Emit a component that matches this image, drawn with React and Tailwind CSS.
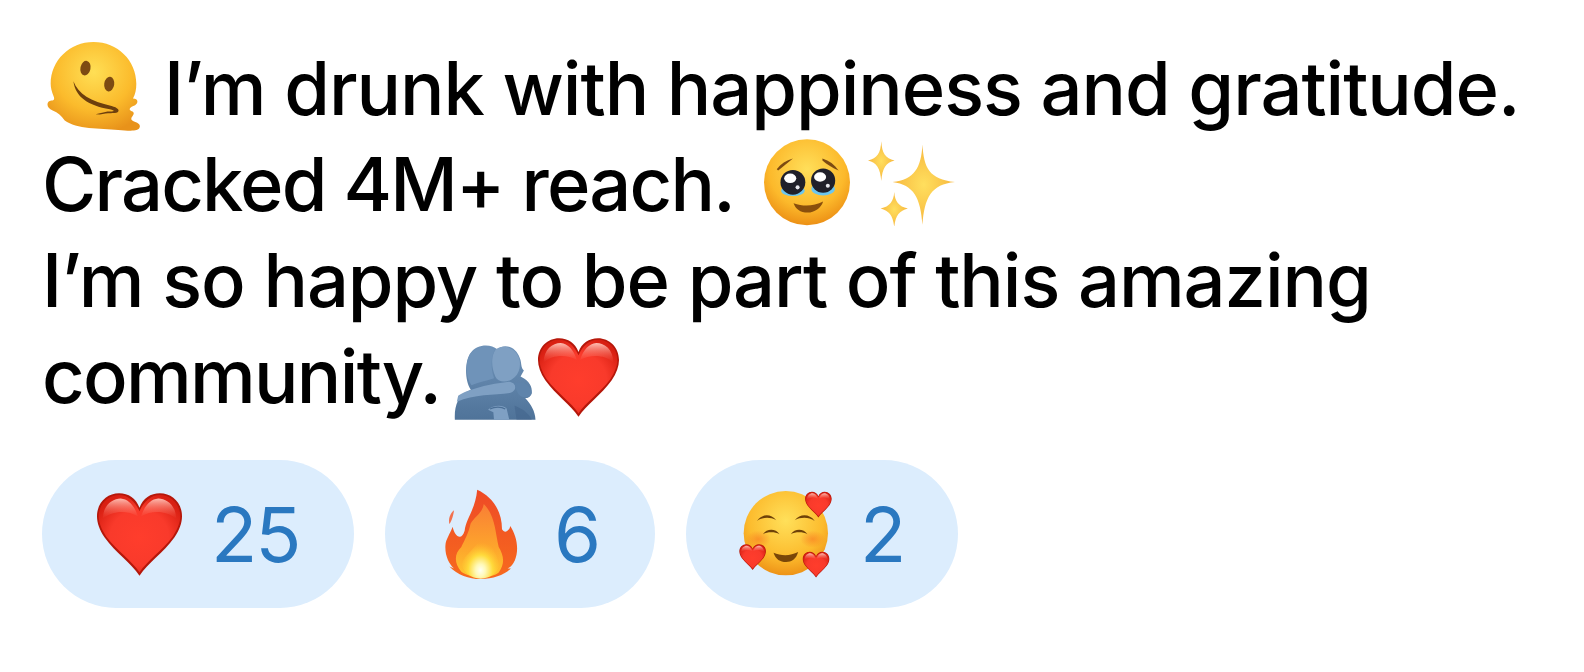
import React from 'react';

function HeartShape({ id = 'heart', transform }) {
  return (
    <g transform={transform}>
      <defs>
        <radialGradient id={`${id}-fill`} cx="0.5" cy="0.55" r="0.6">
          <stop offset="0" stopColor="#ff3d2c" />
          <stop offset="0.6" stopColor="#f93a2b" />
          <stop offset="1" stopColor="#d81f12" />
        </radialGradient>
        <linearGradient id={`${id}-shine`} x1="0" y1="0" x2="0" y2="1">
          <stop offset="0" stopColor="#ffc6bb" stopOpacity="0.95" />
          <stop offset="1" stopColor="#f9604f" stopOpacity="0" />
        </linearGradient>
      </defs>
      <path
        d="M50 97 C40 82 22 70 9 52 C3 43 0 35 0 27 C0 11 12 0 26 0 C37 0 46 6 50 17 C54 6 63 0 74 0 C88 0 100 11 100 27 C100 35 97 43 91 52 C78 70 60 82 50 97 Z"
        fill="#b5170a"
      />
      <path
        d="M50 93 C41 79 24 68 11 51 C5 42 2 34 2 27 C2 12 14 2 26 2 C37 2 45 10 50 21 C55 10 63 2 74 2 C86 2 98 12 98 27 C98 34 95 42 89 51 C76 68 59 79 50 93 Z"
        fill={`url(#${id}-fill)`}
      />
      <path
        d="M7 30 C7 14 18 6 28 6 C37 7 44 14 48 27 C36 20 18 20 7 30 Z M52 27 C56 14 63 7 72 6 C82 6 93 14 93 30 C82 20 64 20 52 27 Z"
        fill={`url(#${id}-shine)`}
      />
    </g>
  );
}

function Heart({ className, id }) {
  return (
    <svg viewBox="0 0 100 97" className={className}>
      <HeartShape id={id} />
    </svg>
  );
}

function MeltingFace({ className }) {
  return (
    <svg viewBox="45 32 285 275" className={className}>
      <defs>
        <radialGradient id="melt" cx="0.5" cy="0.34" r="0.7">
          <stop offset="0" stopColor="#ffdf55" />
          <stop offset="0.6" stopColor="#fbbb2c" />
          <stop offset="1" stopColor="#e8921a" />
        </radialGradient>
      </defs>
      <path
        d="M58 160 C58 90 115 35 186 35 C258 35 314 90 314 160 C314 178 311 192 304 204 C314 204 320 210 316 218 C310 228 296 226 294 236 C296 244 308 240 306 250 C304 258 294 262 302 270 C312 276 328 278 324 290 C320 304 290 300 260 298 C205 294 135 296 100 270 C90 255 80 246 64 240 C44 232 44 212 60 210 C68 210 70 206 67 198 C61 184 58 172 58 160 Z"
        fill="url(#melt)"
      />
      <ellipse cx="162" cy="113" rx="15" ry="22" transform="rotate(12 162 113)" fill="#7d4a12" />
      <ellipse cx="233" cy="161" rx="15" ry="22" transform="rotate(8 233 161)" fill="#7d4a12" />
      <path
        d="M126 152 C140 190 178 212 240 226 C258 231 266 238 258 245 C250 250 228 245 205 252 L192 251 L228 243 C250 243 252 240 235 236 C170 224 132 200 126 152 Z"
        fill="#6e3f0d"
      />
    </svg>
  );
}

function PleadingFace({ className }) {
  return (
    <svg viewBox="42 26 256 259" className={className}>
      <defs>
        <radialGradient id="plead" cx="0.5" cy="0.35" r="0.68">
          <stop offset="0" stopColor="#ffdf5a" />
          <stop offset="0.65" stopColor="#fcb92b" />
          <stop offset="1" stopColor="#ea8a12" />
        </radialGradient>
      </defs>
      <circle cx="170" cy="155" r="128" fill="url(#plead)" />
      <path d="M80 116 C92 100 108 90 128 84 C112 98 98 108 84 120 Z" fill="#7c4a12" />
      <path d="M216 84 C236 90 252 102 264 120 C246 112 230 102 216 90 Z" fill="#7c4a12" />
      <ellipse cx="128" cy="180" rx="35" ry="16" fill="#6cc6ee" />
      <ellipse cx="218" cy="175" rx="35" ry="19" fill="#6cc6ee" />
      <circle cx="128" cy="155" r="37" fill="#20202a" />
      <circle cx="218" cy="150" r="36" fill="#20202a" />
      <ellipse cx="120" cy="143" rx="18" ry="14" fill="#fff" />
      <ellipse cx="209" cy="139" rx="18" ry="14" fill="#fff" />
      <circle cx="142" cy="170" r="6" fill="#e8e8ee" />
      <circle cx="232" cy="165" r="6" fill="#e8e8ee" />
      <path d="M130 217 C160 228 190 226 218 212 C212 232 192 245 172 245 C150 245 136 234 130 217 Z" fill="#8a4f0c" />
    </svg>
  );
}

function Sparkles({ className }) {
  return (
    <svg viewBox="350 30 262 255" className={className}>
      <defs>
        <radialGradient id="spark" cx="0.5" cy="0.5" r="0.5">
          <stop offset="0" stopColor="#ffdf5e" />
          <stop offset="1" stopColor="#f7b73e" />
        </radialGradient>
      </defs>
      <path d="M514 40 C518 110 534 145 612 153 C540 160 520 200 514 282 C508 200 488 162 424 153 C490 146 510 110 514 40 Z" fill="url(#spark)" />
      <path d="M390 30 C392 65 402 82 430 88 C404 94 393 112 390 150 C387 112 376 94 350 88 C378 82 388 65 390 30 Z" fill="url(#spark)" />
      <path d="M429 183 C431 212 442 226 470 233 C444 240 433 254 429 288 C425 254 414 240 388 233 C416 226 427 212 429 183 Z" fill="url(#spark)" />
    </svg>
  );
}

function Hug({ className }) {
  return (
    <svg viewBox="40 55 246 226" className={className}>
      <defs>
        <linearGradient id="hug-body" x1="0" y1="0" x2="0" y2="1">
          <stop offset="0" stopColor="#6f93b9" />
          <stop offset="1" stopColor="#4f7399" />
        </linearGradient>
      </defs>
      <path d="M42 280 C40 240 50 205 90 190 C70 160 72 100 90 78 C108 52 150 50 170 68 C190 50 226 58 238 95 C244 110 240 122 250 132 L240 150 C262 160 280 180 272 205 C266 215 258 215 254 215 C272 235 284 255 285 280 Z" fill="url(#hug-body)" />
      <path d="M166 68 C184 52 224 60 236 96 C242 118 236 140 222 152 C200 172 172 168 164 150 C152 122 150 88 166 68 Z" fill="#7fa0c3" />
      <path d="M92 176 C72 150 74 100 90 80 C106 60 140 54 162 70 C150 92 150 125 160 155 C140 162 112 168 92 176 Z" fill="#6f93b9" />
      <path d="M52 208 C82 188 150 172 205 166 C228 168 232 192 208 200 C160 206 100 204 48 226 Z" fill="#7fa0c3" />
      <path d="M222 170 C245 160 268 172 274 200 C270 214 252 216 238 208 C230 198 224 186 222 170 Z" fill="#5f84ab" />
      <path d="M142 250 C156 236 186 234 198 246 L206 280 L160 280 L158 258 Z" fill="#7fa0c3" />
      <path d="M148 248 C162 240 182 240 194 248" stroke="#4a6e95" strokeWidth="4" fill="none" />
      <path d="M222 238 C242 245 262 258 274 280 L228 280 Z" fill="#3f6189" opacity="0.5" />
    </svg>
  );
}

function Fire({ className }) {
  return (
    <svg viewBox="213 110 220 272" className={className}>
      <defs>
        <linearGradient id="flame-out" x1="0" y1="0" x2="0" y2="1">
          <stop offset="0" stopColor="#ee4a26" />
          <stop offset="1" stopColor="#f76a1e" />
        </linearGradient>
        <linearGradient id="flame-mid" x1="0" y1="0" x2="0" y2="1">
          <stop offset="0" stopColor="#f97f35" />
          <stop offset="0.6" stopColor="#fda52c" />
          <stop offset="1" stopColor="#ffc62e" />
        </linearGradient>
        <radialGradient id="flame-core" cx="0.5" cy="0.82" r="0.6">
          <stop offset="0" stopColor="#fffff2" />
          <stop offset="0.22" stopColor="#fff9b8" />
          <stop offset="0.55" stopColor="#ffdb3c" />
          <stop offset="1" stopColor="#ffb92c" stopOpacity="0" />
        </radialGradient>
      </defs>
      <path d="M240 174 C238 190 232 208 226 216 C222 200 228 184 240 174 Z" fill="#f2714e" />
      <path
        d="M310 112 C350 130 385 170 385 232 C392 244 406 240 410 222 C428 250 438 290 424 325 C418 338 412 346 402 350 L412 350 C392 370 360 382 320 382 C285 382 250 370 226 344 L240 350 C224 335 212 310 214 280 C215 262 228 245 236 224 C240 250 262 270 272 236 C276 200 305 170 310 112 Z"
        fill="url(#flame-out)"
      />
      <path
        d="M330 155 C365 190 365 245 375 285 C390 310 395 335 375 362 C355 380 290 382 262 360 C240 335 240 305 262 285 C272 265 285 240 290 215 C300 195 325 185 330 155 Z"
        fill="url(#flame-mid)"
      />
      <path
        d="M326 240 C340 270 372 300 376 340 C374 362 350 381 320 381 C292 381 268 362 264 340 C268 305 315 290 326 240 Z"
        fill="url(#flame-core)"
      />
    </svg>
  );
}

function SmilingHearts({ className }) {
  return (
    <svg viewBox="193 120 278 262" className={className}>
      <defs>
        <radialGradient id="smile" cx="0.5" cy="0.35" r="0.68">
          <stop offset="0" stopColor="#ffe05a" />
          <stop offset="0.65" stopColor="#fcbb2d" />
          <stop offset="1" stopColor="#ec8d14" />
        </radialGradient>
        <radialGradient id="blush" cx="0.5" cy="0.5" r="0.5">
          <stop offset="0" stopColor="#f8701f" stopOpacity="0.55" />
          <stop offset="1" stopColor="#f8701f" stopOpacity="0" />
        </radialGradient>
      </defs>
      <circle cx="333" cy="247" r="127" fill="url(#smile)" />
      <ellipse cx="250" cy="265" rx="38" ry="26" fill="url(#blush)" />
      <ellipse cx="414" cy="265" rx="38" ry="26" fill="url(#blush)" />
      <path d="M246 210 C262 188 288 188 304 208 C286 198 264 198 246 210 Z" fill="#6e4108" />
      <path d="M360 208 C376 188 404 188 420 210 C402 198 378 198 360 208 Z" fill="#6e4108" />
      <path d="M264 250 C276 232 302 232 314 250 C300 242 278 242 264 250 Z" fill="#6e4108" />
      <path d="M348 250 C360 232 386 232 398 250 C384 242 362 242 348 250 Z" fill="#6e4108" />
      <path d="M296 306 C318 316 348 316 370 304 C364 326 350 334 334 334 C316 334 302 326 296 306 Z" fill="#7a4708" />
      <HeartShape id="sh1" transform="translate(391 122) scale(0.8)" />
      <HeartShape id="sh2" transform="translate(193 280) scale(0.8)" />
      <HeartShape id="sh3" transform="translate(384 303) scale(0.8)" />
    </svg>
  );
}

function Reaction({ children, count, className }) {
  return (
    <div className={`flex h-[148px] items-center rounded-full bg-[#dcedfd] ${className}`}>
      {children}
      <span className="text-[76px] font-[425] leading-none tracking-[-2px] text-[#2a78c0]">{count}</span>
    </div>
  );
}

export default function App() {
  return (
    <div className="h-[672px] w-[1584px] overflow-hidden bg-white pl-[42px] pt-[40px] font-['Inter',sans-serif] text-black">
      <div className="text-[74px] font-[450] leading-[96px] tracking-[-1.04px]">
        <div className="whitespace-nowrap">
          <MeltingFace className="mr-[22px] ml-[4px] inline-block h-[92px] w-[96px] align-[-18px]" />
          I’m drunk with happiness and gratitude.
        </div>
        <div className="whitespace-nowrap">
          <span className="tracking-[-1.8px]">Cracked 4M+ reach.</span>
          <PleadingFace className="ml-[30px] inline-block h-[87px] w-[86px] align-[-15px]" />
          <Sparkles className="ml-[18px] inline-block h-[85px] w-[87px] align-[-15px]" />
        </div>
        <div className="whitespace-nowrap">I’m so happy to be part of this amazing</div>
        <div className="whitespace-nowrap">
          <span className="tracking-[-1.7px]">community.</span>
          <Hug className="ml-[14px] inline-block h-[75px] w-[82px] align-[-17px]" />
          <Heart id="h1" className="ml-[2px] inline-block h-[79px] w-[81px] align-[-14px]" />
        </div>
      </div>
      <div className="mt-[36px] flex gap-[31px]">
        <Reaction count="25" className="w-[312px] pl-[55px]">
          <Heart id="h2" className="mr-[29px] h-[85px] w-[85px]" />
        </Reaction>
        <Reaction count="6" className="w-[270px] pl-[60px]">
          <Fire className="mr-[36px] h-[90px] w-[73px]" />
        </Reaction>
        <Reaction count="2" className="w-[272px] pl-[53px]">
          <SmilingHearts className="mr-[28px] h-[87px] w-[93px]" />
        </Reaction>
      </div>
    </div>
  );
}
